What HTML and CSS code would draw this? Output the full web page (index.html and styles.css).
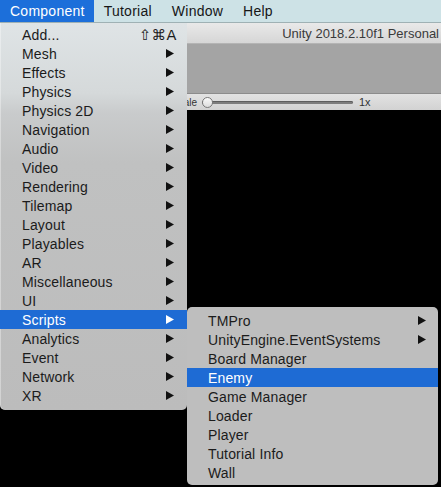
FILE: index.html
```html
<!DOCTYPE html>
<html>
<head>
<meta charset="utf-8">
<link rel="stylesheet" href="styles.css">
</head>
<body>
<div class="screen">
  <div class="menubar">
    <span class="mb-item active">Component</span>
    <span class="mb-item">Tutorial</span>
    <span class="mb-item">Window</span>
    <span class="mb-item">Help</span>
  </div>
  <div class="window">
    <div class="titlebar"><span class="title">Unity 2018.2.10f1 Personal</span></div>
    <div class="toolbar"></div>
    <div class="scalebar">
      <span class="scale-label">Scale</span>
      <span class="slider"><span class="knob"></span><span class="track"></span></span>
      <span class="scale-value">1x</span>
    </div>
    <div class="viewport"></div>
  </div>

  <div class="menu main-menu">
    <div class="item"><span class="label">Add...</span><span class="shortcut">⇧⌘A</span></div>
    <div class="item"><span class="label">Mesh</span><svg class="arrow" viewBox="0 0 8 9"><polygon points="0,0 8,4.5 0,9"/></svg></div>
    <div class="item"><span class="label">Effects</span><svg class="arrow" viewBox="0 0 8 9"><polygon points="0,0 8,4.5 0,9"/></svg></div>
    <div class="item"><span class="label">Physics</span><svg class="arrow" viewBox="0 0 8 9"><polygon points="0,0 8,4.5 0,9"/></svg></div>
    <div class="item"><span class="label">Physics 2D</span><svg class="arrow" viewBox="0 0 8 9"><polygon points="0,0 8,4.5 0,9"/></svg></div>
    <div class="item"><span class="label">Navigation</span><svg class="arrow" viewBox="0 0 8 9"><polygon points="0,0 8,4.5 0,9"/></svg></div>
    <div class="item"><span class="label">Audio</span><svg class="arrow" viewBox="0 0 8 9"><polygon points="0,0 8,4.5 0,9"/></svg></div>
    <div class="item"><span class="label">Video</span><svg class="arrow" viewBox="0 0 8 9"><polygon points="0,0 8,4.5 0,9"/></svg></div>
    <div class="item"><span class="label">Rendering</span><svg class="arrow" viewBox="0 0 8 9"><polygon points="0,0 8,4.5 0,9"/></svg></div>
    <div class="item"><span class="label">Tilemap</span><svg class="arrow" viewBox="0 0 8 9"><polygon points="0,0 8,4.5 0,9"/></svg></div>
    <div class="item"><span class="label">Layout</span><svg class="arrow" viewBox="0 0 8 9"><polygon points="0,0 8,4.5 0,9"/></svg></div>
    <div class="item"><span class="label">Playables</span><svg class="arrow" viewBox="0 0 8 9"><polygon points="0,0 8,4.5 0,9"/></svg></div>
    <div class="item"><span class="label">AR</span><svg class="arrow" viewBox="0 0 8 9"><polygon points="0,0 8,4.5 0,9"/></svg></div>
    <div class="item"><span class="label">Miscellaneous</span><svg class="arrow" viewBox="0 0 8 9"><polygon points="0,0 8,4.5 0,9"/></svg></div>
    <div class="item"><span class="label">UI</span><svg class="arrow" viewBox="0 0 8 9"><polygon points="0,0 8,4.5 0,9"/></svg></div>
    <div class="item selected"><span class="label">Scripts</span><svg class="arrow" viewBox="0 0 8 9"><polygon points="0,0 8,4.5 0,9"/></svg></div>
    <div class="item"><span class="label">Analytics</span><svg class="arrow" viewBox="0 0 8 9"><polygon points="0,0 8,4.5 0,9"/></svg></div>
    <div class="item"><span class="label">Event</span><svg class="arrow" viewBox="0 0 8 9"><polygon points="0,0 8,4.5 0,9"/></svg></div>
    <div class="item"><span class="label">Network</span><svg class="arrow" viewBox="0 0 8 9"><polygon points="0,0 8,4.5 0,9"/></svg></div>
    <div class="item"><span class="label">XR</span><svg class="arrow" viewBox="0 0 8 9"><polygon points="0,0 8,4.5 0,9"/></svg></div>
  </div>

  <div class="menu sub-menu">
    <div class="item"><span class="label">TMPro</span><svg class="arrow" viewBox="0 0 8 9"><polygon points="0,0 8,4.5 0,9"/></svg></div>
    <div class="item"><span class="label">UnityEngine.EventSystems</span><svg class="arrow" viewBox="0 0 8 9"><polygon points="0,0 8,4.5 0,9"/></svg></div>
    <div class="item"><span class="label">Board Manager</span></div>
    <div class="item selected"><span class="label">Enemy</span></div>
    <div class="item"><span class="label">Game Manager</span></div>
    <div class="item"><span class="label">Loader</span></div>
    <div class="item"><span class="label">Player</span></div>
    <div class="item"><span class="label">Tutorial Info</span></div>
    <div class="item"><span class="label">Wall</span></div>
  </div>
</div>
</body>
</html>
```

FILE: styles.css
```css
* { box-sizing: border-box; }
html, body { margin: 0; padding: 0; }
body {
  width: 441px;
  height: 487px;
  overflow: hidden;
  background: #000;
  font-family: "Liberation Sans", Arial, sans-serif;
}
.screen {
  position: relative;
  width: 441px;
  height: 487px;
  display: flex;
  flex-direction: column;
}

/* menu bar */
.menubar {
  height: 23px;
  display: flex;
  align-items: stretch;
  background: #cde2e6;
  border-bottom: 1px solid #9fb1b4;
  font-size: 14px;
  letter-spacing: 0.25px;
  color: #161616;
}
.mb-item {
  display: flex;
  align-items: center;
  padding: 0 10px 0 10px;
  height: 22px;
}
.mb-item.active {
  background: #1c6fda;
  color: #fff;
  padding-right: 9px;
}

/* window behind */
.window {
  flex: 1;
  display: flex;
  flex-direction: column;
}
.titlebar {
  height: 21px;
  display: flex;
  align-items: center;
  justify-content: flex-end;
  padding-right: 2px;
  background: linear-gradient(#e9e9e9, #d6d6d6);
  border-bottom: 1px solid #b4b4b4;
  font-size: 13px;
  color: #3a3a3a;
}
.toolbar {
  height: 49px;
  background: #a4a4a4;
}
.scalebar {
  height: 17px;
  display: flex;
  align-items: center;
  padding-left: 172px;
  background: linear-gradient(#e2e2e2, #d2d2d2);
  border-top: 1px solid #8c8c8c;
  font-size: 11px;
  color: #333;
}
.scale-label { flex: none; width: 30px; font-size: 10px; }
.slider {
  position: relative;
  display: flex;
  align-items: center;
  width: 151px;
  height: 11px;
}
.track {
  flex: 1;
  height: 3px;
  border-radius: 2px;
  background: #7d7d7d;
  box-shadow: inset 0 1px 0 #5e5e5e;
}
.knob {
  position: absolute;
  left: 0;
  top: 0;
  width: 11px;
  height: 11px;
  border-radius: 50%;
  border: 1px solid #7a7a7a;
  background: linear-gradient(#fafafa, #dcdcdc);
}
.scale-value { margin-left: 6px; }
.viewport {
  flex: 1;
  background: #000;
}

/* menus */
.menu {
  position: absolute;
  font-size: 14px;
  letter-spacing: 0.15px;
  color: #1b1b1b;
}
.main-menu {
  left: 0;
  top: 23px;
  width: 187px;
  padding: 2px 0 5px;
  border-radius: 0 0 5px 5px;
  background: linear-gradient(#dfe4e6 0px, #d5d9da 70px, #c9cbcc 90px, #c0c1c1 140px, #bcbcbc 100%);
  box-shadow: inset 1px 0 0 rgba(255,255,255,0.35);
}
.sub-menu {
  left: 187px;
  top: 307px;
  width: 251px;
  padding: 4px 0 3px;
  border-radius: 5px;
  background: #bebebe;
}
.item {
  display: flex;
  align-items: center;
  height: 19px;
  padding: 0 13px 0 22px;
}
.sub-menu .item { padding: 0 12px 0 21px; }
.label { flex: 1; white-space: nowrap; }
.shortcut {
  margin-right: -3px;
  font-family: "DejaVu Sans", "Liberation Sans", sans-serif;
  font-size: 14.5px;
  letter-spacing: 0.5px;
}
.arrow { width: 8px; height: 9px; fill: #111; }
.item.selected {
  background: #1e6bd4;
  color: #fff;
}
.item.selected .arrow { fill: #fff; }
```
